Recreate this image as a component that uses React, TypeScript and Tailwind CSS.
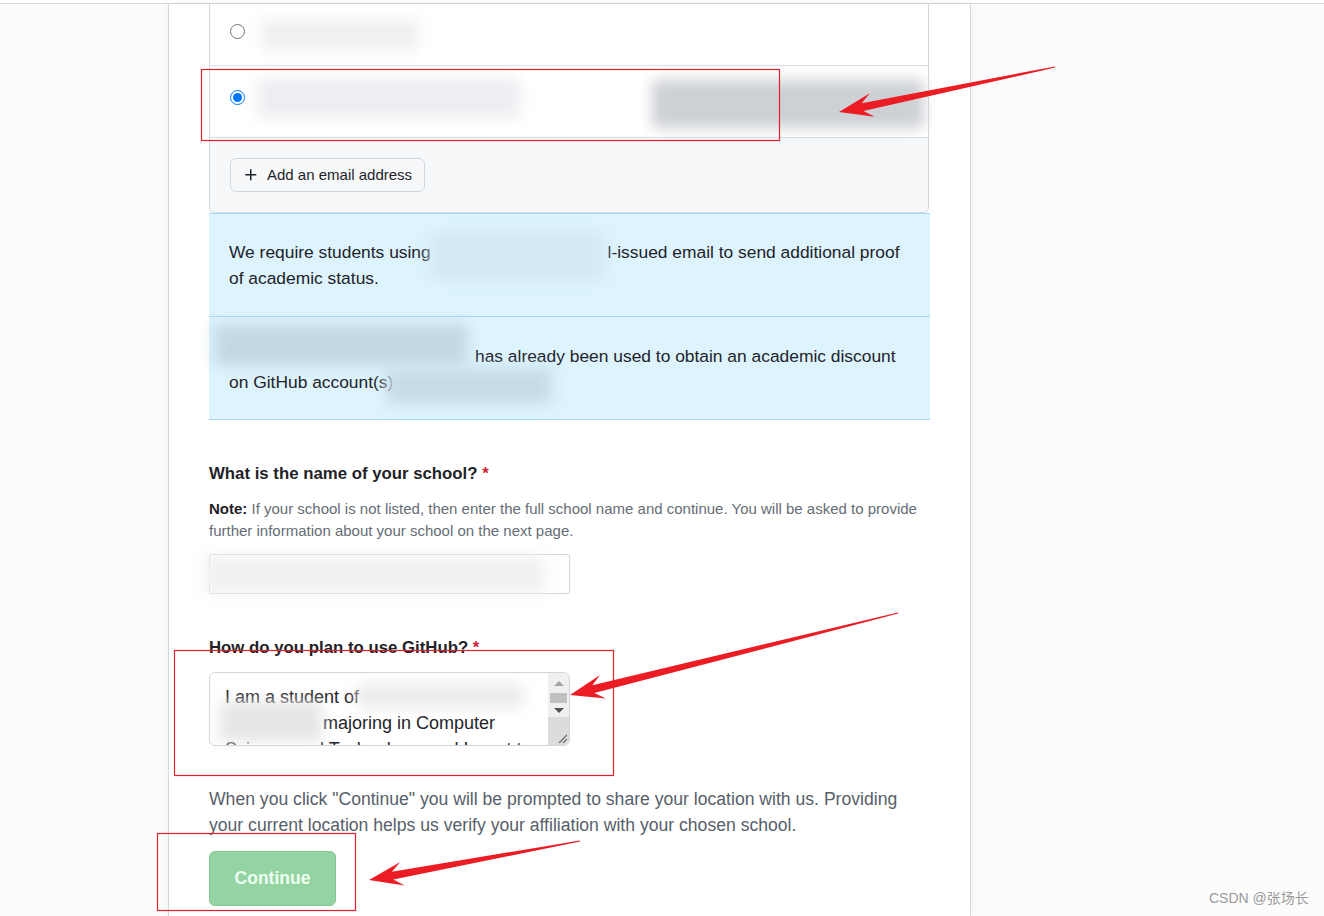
import React from 'react';

type Pt = [number, number];

// tapered annotation arrow, drawn from tail to tip
function arrowPoints(tail: Pt, tip: Pt) {
  const [tx, ty] = tail;
  const [px, py] = tip;
  const len = Math.hypot(px - tx, py - ty);
  const dx = (px - tx) / len;
  const dy = (py - ty) / len;
  const nx = -dy;
  const ny = dx;
  const at = (back: number, side: number): Pt => [px - dx * back + nx * side, py - dy * back + ny * side];
  const pts: Pt[] = [
    [tx + nx * 0.6, ty + ny * 0.6],
    at(24, 4),
    at(34, 12),
    [px, py],
    at(34, -12),
    at(24, -4),
    [tx - nx * 0.6, ty - ny * 0.6],
  ];
  return pts.map((p) => p.join(',')).join(' ');
}

function Annotations() {
  const arrows: [Pt, Pt][] = [
    [[1055, 67], [839, 112]],
    [[898, 613], [570, 695]],
    [[580, 841], [369, 880]],
  ];
  return (
    <svg className="absolute inset-0 pointer-events-none" width="1324" height="916">
      <rect x="201.5" y="69.5" width="578" height="71" fill="none" stroke="#e0202a" strokeWidth="1.2" />
      <rect x="174.5" y="650.5" width="439" height="125" fill="none" stroke="#e0202a" strokeWidth="1.2" />
      <rect x="157.5" y="833.5" width="198" height="77" fill="none" stroke="#e0202a" strokeWidth="1.2" />
      {arrows.map(([t, p], i) => (
        <polygon key={i} points={arrowPoints(t, p)} fill="#ec1c24" />
      ))}
    </svg>
  );
}

function Blur({ className }: { className: string }) {
  return <div className={`absolute pointer-events-none blur-[7px] ${className}`} />;
}

export default function App() {
  return (
    <div className="relative w-[1324px] h-[916px] overflow-hidden bg-[#fcfcfc] font-['Liberation_Sans','Noto_Sans_CJK_SC',sans-serif] text-[#1f2328]">
      <div className="h-[3px] bg-white" />
      <div className="h-[1px] bg-[#d8d8d8]" />
      <div className="flex">
        <div className="w-[168px] shrink-0" />
        <div className="w-[803px] shrink-0 h-[912px] bg-white border-x border-[#d0d7de] shadow-[0_0_10px_rgba(0,0,0,0.05)] px-[40px]">
          {/* email list */}
          <div className="w-[720px] border border-t-0 border-[#d0d7de] rounded-b-md overflow-hidden">
            <div className="h-[62px] flex items-center pl-[20px] pb-[6px] border-b border-[#d8dee4]">
              <input type="radio" name="email" readOnly className="w-[15px] h-[15px] m-0 accent-[#0075ff]" />
            </div>
            <div className="h-[72px] flex items-center pl-[20px] pb-[8px] border-b border-[#d8dee4]">
              <input type="radio" name="email" defaultChecked readOnly className="w-[15px] h-[15px] m-0 accent-[#0075ff]" />
            </div>
            <div className="h-[74px] bg-[#f6f8fa] pt-[20px] pl-[20px]">
              <button className="h-[34px] px-[12px] flex items-center gap-[8px] bg-[#f6f8fa] border border-[#d0d7de] rounded-md text-[15px] font-medium text-[#1f2328]">
                <svg width="16" height="16" viewBox="0 0 16 16" fill="#1f2328">
                  <path d="M7.75 2a.75.75 0 0 1 .75.75V7h4.25a.75.75 0 0 1 0 1.5H8.5v4.25a.75.75 0 0 1-1.5 0V8.5H2.75a.75.75 0 0 1 0-1.5H7V2.75A.75.75 0 0 1 7.75 2Z" />
                </svg>
                Add an email address
              </button>
            </div>
          </div>

          {/* flash notices */}
          <div className="w-[721px] bg-[#ddf4ff] border-t border-[#a7d7f5] px-[20px] pt-[25px] pb-[25px] text-[17.4px] leading-[26px] h-[103px] whitespace-nowrap">
            We require students using <span className="inline-block w-[172px]" />l-issued email to send additional proof
            <br />
            of academic status.
          </div>
          <div className="w-[721px] bg-[#ddf4ff] border-y border-[#a7d7f5] px-[20px] pt-[26px] pb-[24px] text-[17.4px] leading-[26px] h-[104px] whitespace-nowrap">
            <span className="inline-block w-[246px]" />
            has already been used to obtain an academic discount
            <br />
            on GitHub account(s)
          </div>

          {/* school */}
          <div className="mt-[41px] text-[16.8px] leading-[26px] font-semibold">
            What is the name of your school? <span className="text-[#cf222e]">*</span>
          </div>
          <p className="mt-[11px] text-[15px] leading-[22px] text-[#656d76] whitespace-nowrap">
            <b className="text-[#1f2328] font-semibold">Note:</b> If your school is not listed, then enter the full school name and continue. You will be asked to provide
            <br />
            further information about your school on the next page.
          </p>
          <div className="mt-[12px] w-[361px] h-[40px] border border-[#d0d7de] rounded-[3px] bg-white" />

          {/* plan */}
          <div className="mt-[41px] text-[16.8px] leading-[26px] font-semibold">
            How do you plan to use GitHub? <span className="text-[#cf222e]">*</span>
          </div>
          <div className="mt-[11px] w-[361px] h-[74px] border border-[#d0d7de] rounded-md bg-white flex overflow-hidden">
            <div className="flex-1 px-[15px] pt-[11px] text-[18px] leading-[26px] text-[#1f2328] overflow-hidden">
              I am a student of
              <br />
              <span className="inline-block w-[98px]" />majoring in Computer
              <br />
              Science and Technology, and I want to
            </div>
            <div className="w-[21px] bg-[#f0f0f0] flex flex-col items-center">
              <div className="h-[20px] flex items-center justify-center">
                <div className="w-0 h-0 border-x-[5px] border-x-transparent border-b-[5px] border-b-[#a3a3a3]" />
              </div>
              <div className="w-[17px] h-[10px] bg-[#c1c1c1]" />
              <div className="h-[14px] flex items-center justify-center">
                <div className="w-0 h-0 border-x-[5px] border-x-transparent border-t-[5px] border-t-[#505050]" />
              </div>
              <div className="flex-1 w-full bg-[#dcdcdc] flex items-end justify-end pr-[2px] pb-[2px]">
                <svg width="10" height="10" viewBox="0 0 10 10" stroke="#666" strokeWidth="1.2">
                  <line x1="2" y1="10" x2="10" y2="2" />
                  <line x1="6" y1="10" x2="10" y2="6" />
                </svg>
              </div>
            </div>
          </div>

          <p className="mt-[40px] text-[17.6px] leading-[26px] text-[#57606a] whitespace-nowrap">
            When you click "Continue" you will be prompted to share your location with us. Providing
            <br />
            your current location helps us verify your affiliation with your chosen school.
          </p>
          <button className="mt-[13px] w-[127px] h-[55px] rounded-md bg-[#94d3a2] border border-[#85c493] text-[17.5px] font-semibold text-[#edfff1]">
            Continue
          </button>
        </div>
        <div className="flex-1" />
      </div>

      {/* redactions */}
      <Blur className="left-[262px] top-[20px] w-[156px] h-[30px] bg-[#efefef]" />
      <Blur className="left-[258px] top-[78px] w-[262px] h-[40px] bg-[#eceef1]" />
      <Blur className="left-[652px] top-[80px] w-[272px] h-[48px] bg-[#cdd0d4]" />
      <Blur className="left-[430px] top-[232px] w-[174px] h-[48px] bg-[#d2e9f5]" />
      <Blur className="left-[214px] top-[324px] w-[254px] h-[42px] bg-[#c3d8e5]" />
      <Blur className="left-[386px] top-[368px] w-[166px] h-[36px] bg-[#c7dbe7]" />
      <Blur className="left-[205px] top-[556px] w-[340px] h-[38px] bg-[#f1f1f1]" />
      <Blur className="left-[357px] top-[684px] w-[166px] h-[24px] bg-[#ececec]" />
      <Blur className="left-[220px] top-[702px] w-[102px] h-[40px] bg-[#e6e6e6]" />

      <Annotations />

      <div className="absolute left-[1209px] top-[889px] text-[14px] leading-[18px] text-[#9a9a9a]">CSDN @张场长</div>
    </div>
  );
}
